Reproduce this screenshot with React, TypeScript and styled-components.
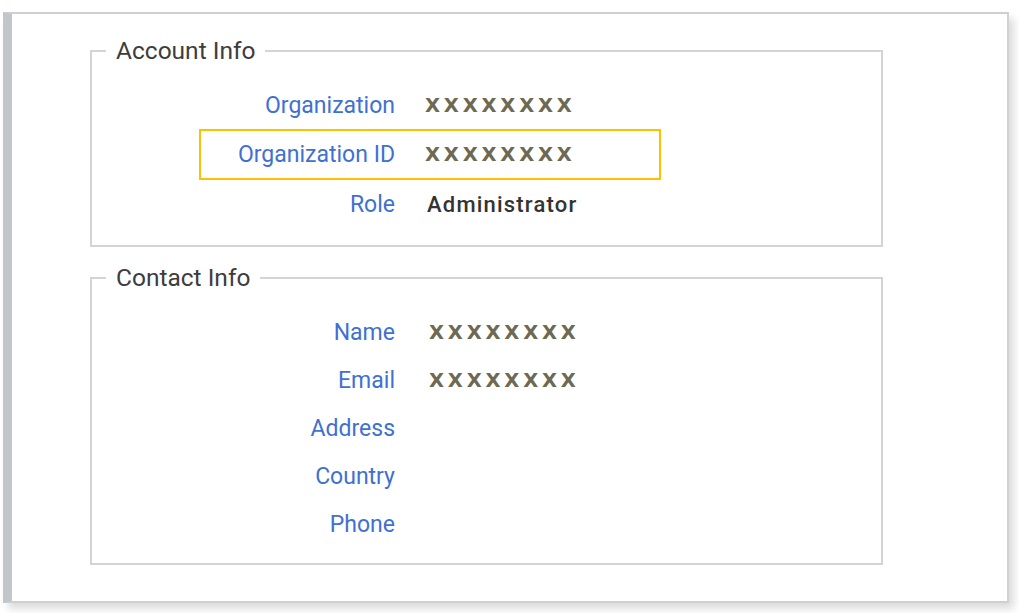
import React from "react";
import styled, { createGlobalStyle } from "styled-components";

const GlobalStyle = createGlobalStyle`
  html, body {
    margin: 0;
    padding: 0;
    background: #ffffff;
    font-family: Roboto, "Liberation Sans", sans-serif;
  }
`;

const Page = styled.div`
  width: 1019px;
  height: 613px;
  padding: 12px 0 0 3px;
  box-sizing: border-box;
  background: #ffffff;
`;

const Panel = styled.div`
  width: 1006px;
  height: 591px;
  box-sizing: border-box;
  background: #ffffff;
  border-top: 2px solid #cdd0d3;
  border-right: 2px solid #d0d3d6;
  border-bottom: 2px solid #cdd0d3;
  border-left: 9px solid #c2c6ca;
  box-shadow: 5px 6px 8px rgba(0, 0, 0, 0.14);
  padding: 22px 0 0 78px;
  display: flex;
  flex-direction: column;
  gap: 16px;
`;

const Group = styled.fieldset<{ $bottom: number }>`
  width: 793px;
  box-sizing: border-box;
  margin: 0;
  border: 2px solid #d4d4d4;
  padding: 15px 14px ${(p) => p.$bottom}px 14px;
  min-inline-size: 0;
`;

const Legend = styled.legend`
  padding: 0 10px;
  font-family: Roboto, "Liberation Sans", sans-serif;
  font-size: 24.5px;
  line-height: 30px;
  color: #3d3d3d;
`;

const Rows = styled.div`
  margin-left: 93px;
  display: flex;
  flex-direction: column;
`;

const Row = styled.div<{ $highlight?: boolean }>`
  width: 462px;
  box-sizing: border-box;
  height: ${(p) => (p.$highlight ? "51px" : "48px")};
  border: 2px solid ${(p) => (p.$highlight ? "#ffc000" : "transparent")};
  display: grid;
  grid-template-columns: 194px 1fr;
  column-gap: 30px;
  align-items: center;
`;

const Label = styled.span`
  text-align: right;
  font-family: Roboto, "Liberation Sans", sans-serif;
  font-size: 23px;
  color: #3f70d2;
  white-space: nowrap;
`;

const Masked = styled.span<{ $shift?: number }>`
  font-family: "DejaVu Sans", sans-serif;
  font-weight: 700;
  font-size: 19.5px;
  letter-spacing: 3.8px;
  color: #6d6952;
  padding-left: ${(p) => p.$shift ?? 0}px;
  white-space: nowrap;
`;

const Plain = styled.span`
  font-family: Roboto, "Liberation Sans", sans-serif;
  font-weight: 500;
  font-size: 22px;
  letter-spacing: 1.2px;
  color: #333333;
  padding-left: 2px;
  white-space: nowrap;
`;

type Field = { label: string; value?: string; kind?: "masked" | "plain"; highlight?: boolean };

const account: Field[] = [
  { label: "Organization", value: "XXXXXXXX", kind: "masked" },
  { label: "Organization ID", value: "XXXXXXXX", kind: "masked", highlight: true },
  { label: "Role", value: "Administrator", kind: "plain" },
];

const contact: Field[] = [
  { label: "Name", value: "XXXXXXXX", kind: "masked" },
  { label: "Email", value: "XXXXXXXX", kind: "masked" },
  { label: "Address" },
  { label: "Country" },
  { label: "Phone" },
];

function FieldRows({ fields, shift }: { fields: Field[]; shift: number }) {
  return (
    <Rows>
      {fields.map((f) => (
        <Row key={f.label} $highlight={f.highlight}>
          <Label>{f.label}</Label>
          {f.kind === "masked" ? (
            <Masked $shift={shift}>{f.value}</Masked>
          ) : f.kind === "plain" ? (
            <Plain>{f.value}</Plain>
          ) : (
            <span />
          )}
        </Row>
      ))}
    </Rows>
  );
}

export default function App() {
  return (
    <>
      <GlobalStyle />
      <Page>
        <Panel>
          <Group $bottom={17}>
            <Legend>Account Info</Legend>
            <FieldRows fields={account} shift={0} />
          </Group>
          <Group $bottom={15}>
            <Legend>Contact Info</Legend>
            <FieldRows fields={contact} shift={4} />
          </Group>
        </Panel>
      </Page>
    </>
  );
}
